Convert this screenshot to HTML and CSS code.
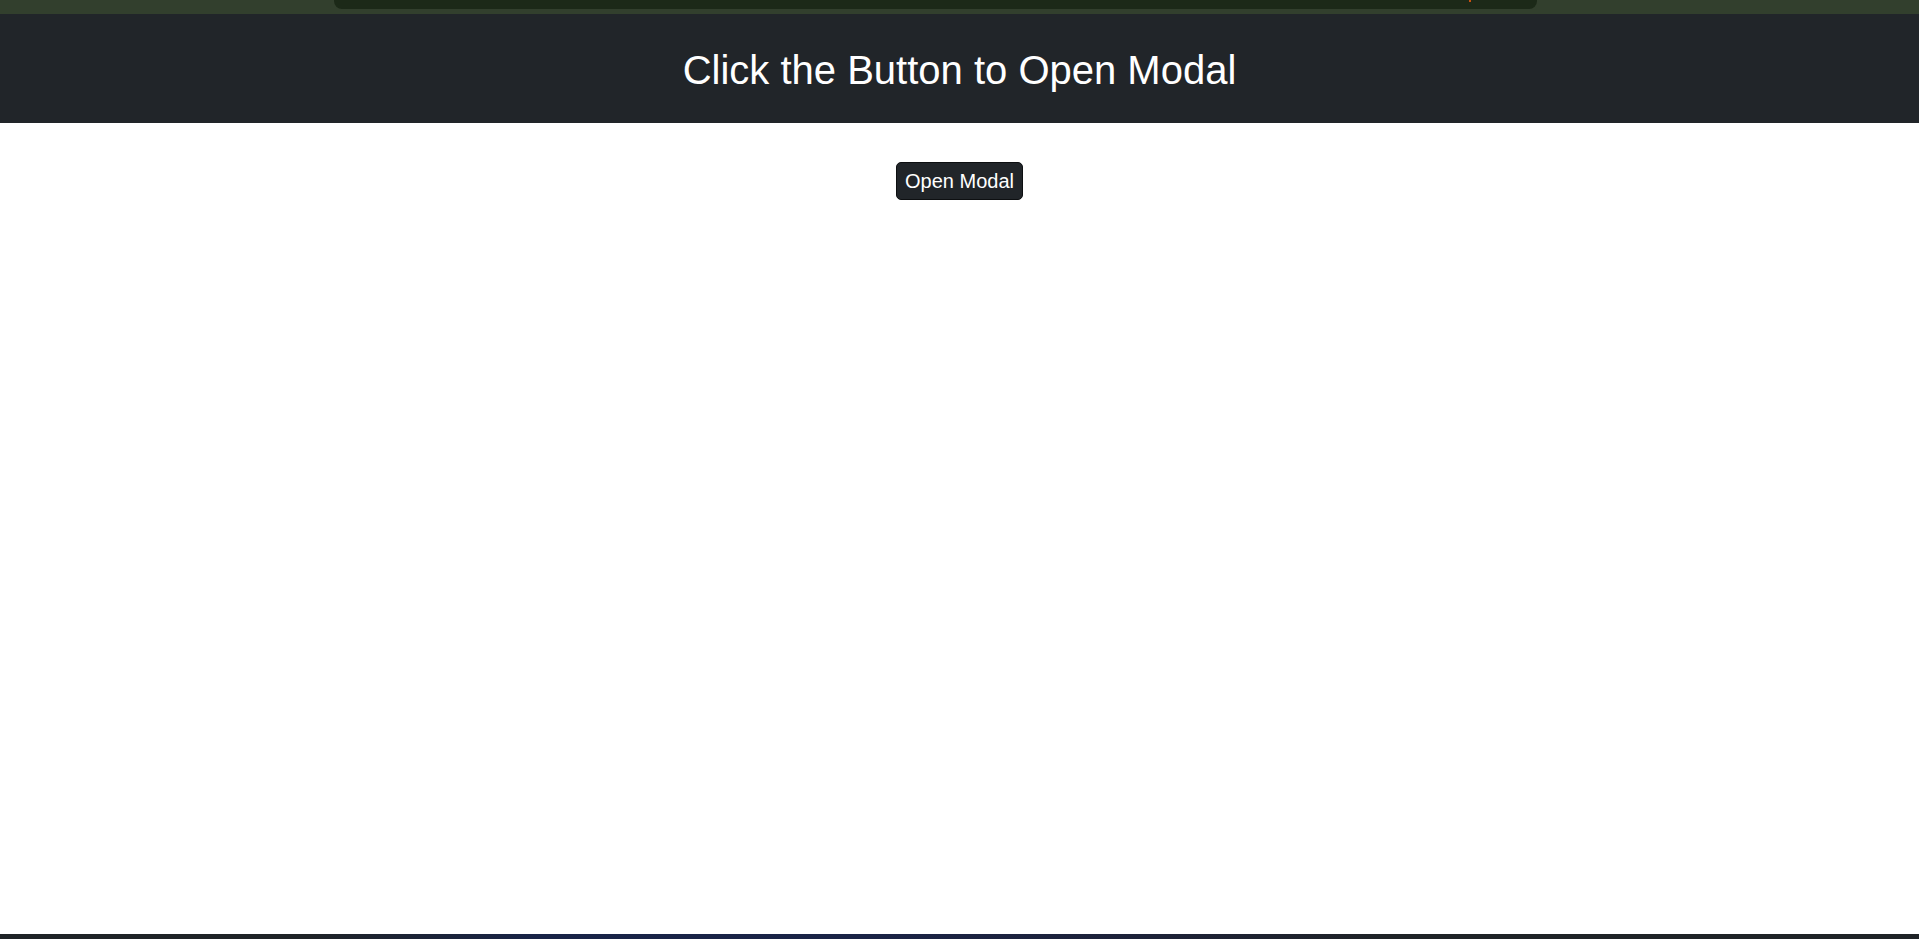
FILE: index.html
```html
<!DOCTYPE html>
<html lang="en">
<head>
<meta charset="utf-8">
<title>Modal</title>
<link rel="stylesheet" href="styles.css">
</head>
<body>
<div class="page">
  <div class="topstrip">
    <div class="topstrip-inner"><span class="dot"></span></div>
  </div>
  <header class="header">
    <h1 class="title">Click the Button to Open Modal</h1>
  </header>
  <main class="main">
    <button class="open-btn" type="button">Open Modal</button>
  </main>
  <div class="bottombar"></div>
</div>
</body>
</html>
```
FILE: styles.css
```css
html, body {
  margin: 0;
  padding: 0;
  height: 100%;
  background: #ffffff;
  font-family: "Liberation Sans", Arial, sans-serif;
}
.page {
  display: flex;
  flex-direction: column;
  height: 100%;
}
.topstrip {
  height: 14px;
  background: #323f2d;
  padding: 0 382px 0 334px;
  flex: 0 0 auto;
}
.topstrip-inner {
  height: 9px;
  background: #1c2918;
  border-radius: 0 0 8px 8px;
  position: relative;
}
.dot {
  position: absolute;
  left: 1135px;
  top: 0;
  width: 2px;
  height: 2px;
  background: #c8500f;
}
.header {
  background: #212529;
  flex: 0 0 auto;
  padding: 34px 0 30px;
}
.title {
  margin: 0;
  text-align: center;
  color: #ffffff;
  font-weight: normal;
  font-size: 40px;
  line-height: 45px;
}
.main {
  flex: 1 1 auto;
  display: flex;
  justify-content: center;
  align-items: flex-start;
  padding-top: 39px;
}
.open-btn {
  font-family: "Liberation Sans", Arial, sans-serif;
  font-size: 20px;
  line-height: 22px;
  color: #ffffff;
  background: #212529;
  border: 1px solid #0d0f11;
  border-radius: 5px;
  padding: 7px 8px;
  margin: 0;
  cursor: pointer;
}
.bottombar {
  flex: 0 0 5px;
  background: linear-gradient(90deg, #1f2327 0%, #1f2327 16%, #182347 28%, #1a2346 45%, #1d2238 60%, #1f2327 72%, #1f2327 100%);
}
```
